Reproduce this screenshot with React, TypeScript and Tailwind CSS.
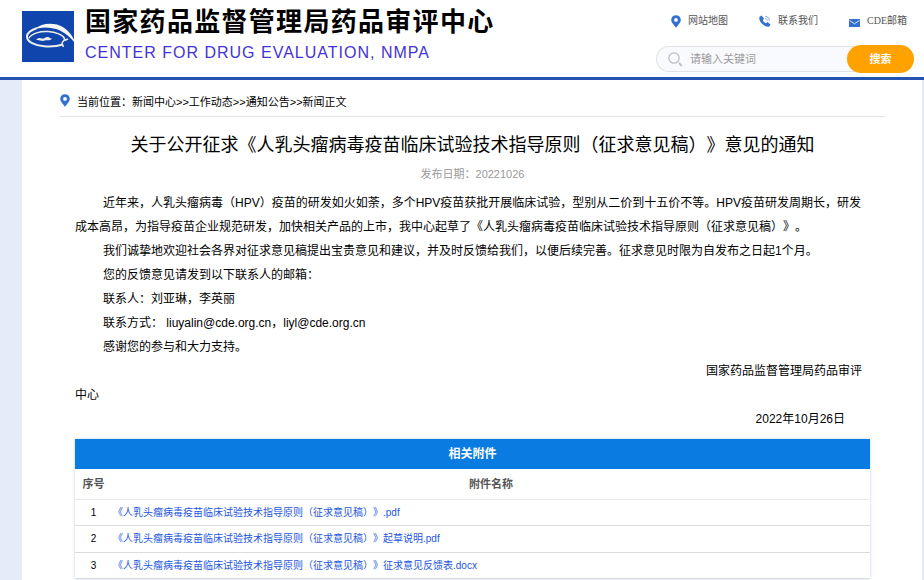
import type { ReactNode } from 'react'

const PARAGRAPHS = [
  '近年来，人乳头瘤病毒（HPV）疫苗的研发如火如荼，多个HPV疫苗获批开展临床试验，型别从二价到十五价不等。HPV疫苗研发周期长，研发成本高昂，为指导疫苗企业规范研发，加快相关产品的上市，我中心起草了《人乳头瘤病毒疫苗临床试验技术指导原则（征求意见稿）》。',
  '我们诚挚地欢迎社会各界对征求意见稿提出宝贵意见和建议，并及时反馈给我们，以便后续完善。征求意见时限为自发布之日起1个月。',
  '您的反馈意见请发到以下联系人的邮箱：',
  '联系人：刘亚琳，李英丽',
  '联系方式： liuyalin@cde.org.cn，liyl@cde.org.cn',
  '感谢您的参与和大力支持。',
]

const ATTACHMENTS = [
  '《人乳头瘤病毒疫苗临床试验技术指导原则（征求意见稿）》.pdf',
  '《人乳头瘤病毒疫苗临床试验技术指导原则（征求意见稿）》起草说明.pdf',
  '《人乳头瘤病毒疫苗临床试验技术指导原则（征求意见稿）》征求意见反馈表.docx',
]

const CRUMBS = ['新闻中心', '工作动态', '通知公告', '新闻正文']

function Logo() {
  return (
    <svg viewBox="0 0 54 51" className="h-[51px] w-[54px] shrink-0" aria-hidden="true">
      <rect width="52" height="51" fill="#1045ad" />
      <path
        d="M13 18C18 13 27 11.5 35 13.5C44 16 50 23 54 33C48 26 42 20.5 34 18C27 16 20 16 13 18Z"
        fill="#f7f5f2"
      />
      <path
        d="M15 17C9 19 5 22 5 25.5C5 31 13 34.5 22 35.2C29 35.7 36 35 41 33.5"
        fill="none"
        stroke="#efede9"
        strokeWidth="2"
      />
      <path
        d="M7 27C10 22.5 18 20 26 20.5C34 21 41 24 42.5 27.5C43 29.5 40 30.5 40 32.5L41.5 36M42.5 29.5L46 28"
        fill="none"
        stroke="#efede9"
        strokeWidth="1.5"
      />
      <path
        d="M14 29C16 26.5 18 26.5 20 27.5C23 28 23 25.5 26 26C28 26.2 27 28 30 27.5C28 30.5 25 28.5 22 29.8C19 30.5 18 28.5 14 29Z"
        fill="#efede9"
      />
    </svg>
  )
}

function PinIcon() {
  return (
    <svg viewBox="0 0 10 13" className="h-[13px] w-[10px] shrink-0" aria-hidden="true">
      <path
        fillRule="evenodd"
        d="M5 0.3C2.2 0.3 0.2 2.3 0.2 5C0.2 7.8 3 9.8 5 12.7C7 9.8 9.8 7.8 9.8 5C9.8 2.3 7.8 0.3 5 0.3ZM5 3A1.9 1.9 0 1 1 5 6.8A1.9 1.9 0 1 1 5 3Z"
        fill="#3370cf"
      />
    </svg>
  )
}

function PhoneIcon() {
  return (
    <svg viewBox="0 0 12 12" className="size-3 shrink-0" aria-hidden="true">
      <path
        d="M0.6 1.8L2.6 0.5L5 3.6L3.8 5.2C4.4 6.5 5.5 7.6 6.9 8.2L8.5 7L11.5 9.4L10.2 11.4C8.6 12.2 5.5 11.2 3.1 8.8C0.7 6.2 -0.3 3.3 0.6 1.8Z"
        fill="#3370cf"
      />
      <path d="M6.3 3.6C7.5 3.7 8.2 4.4 8.3 5.6M6.3 1.5C8.8 1.6 10.3 3.1 10.4 5.6" fill="none" stroke="#7ba1dd" />
    </svg>
  )
}

function MailIcon() {
  return (
    <svg viewBox="0 0 11 8" className="mt-[3px] h-2 w-[11px] shrink-0" aria-hidden="true">
      <rect width="11" height="8" fill="#3370cf" />
      <path d="M0.5 1.4L5.5 4.8L10.5 1.4" fill="none" stroke="#dce7f8" />
    </svg>
  )
}

function TopLink({ icon, children }: { icon: ReactNode; children: ReactNode }) {
  return (
    <a href="#" className="flex items-center gap-[7px] text-[10px] leading-4 text-[#555]">
      {icon}
      {children}
    </a>
  )
}

function Header() {
  return (
    <header className="flex h-20 items-start justify-between border-b-3 border-[#2553b2] bg-white pr-[10px] pl-[22px]">
      <div className="flex gap-[9px] pt-[11px]">
        <Logo />
        <div className="-mt-2 whitespace-nowrap">
          <p className="text-[26px] leading-[38px] font-bold tracking-wider text-black">国家药品监督管理局药品审评中心</p>
          <p className="text-base leading-6 tracking-[1px] text-[#4433d4]">CENTER FOR DRUG EVALUATION, NMPA</p>
        </div>
      </div>

      <div className="w-[258px] pt-[13px]">
        <nav className="flex justify-between pr-[7px] pl-[15px]" aria-label="快捷链接">
          <TopLink icon={<PinIcon />}>网站地图</TopLink>
          <TopLink icon={<PhoneIcon />}>联系我们</TopLink>
          <TopLink icon={<MailIcon />}>
            <span className="font-['Liberation_Serif','Noto_Sans_CJK_SC',serif]">CDE邮箱</span>
          </TopLink>
        </nav>
        <form className="mt-4 flex h-7 items-center" onSubmit={(event) => event.preventDefault()}>
          <div className="-mr-4 flex h-[26px] min-w-0 flex-1 items-center gap-[7px] rounded-l-full border border-r-0 border-[#e2e2e4] bg-[#f9faff] pr-4 pl-[11px]">
            <svg viewBox="0 0 15 15" className="size-[15px] shrink-0" fill="none" stroke="#bfbfbf" aria-hidden="true">
              <circle cx="6" cy="6" r="5.2" strokeWidth="1.3" />
              <path d="M11 11L13.8 13.8" strokeWidth="1.8" />
            </svg>
            <input
              type="search"
              aria-label="请输入关键词"
              placeholder="请输入关键词"
              className="w-full min-w-0 bg-transparent text-[11px] outline-none placeholder:text-[#999]"
            />
          </div>
          <button type="submit" className="relative h-7 w-[67px] rounded-full bg-[#ffa200] text-[11px] font-bold text-white">
            搜索
          </button>
        </form>
      </div>
    </header>
  )
}

function Breadcrumb() {
  return (
    <nav className="flex h-[37px] items-center gap-[7px] border-b border-[#e2e2e2] pt-2 text-[11px]" aria-label="当前位置">
      <div className="pb-1">
        <PinIcon />
      </div>
      <p>
        当前位置：
        {CRUMBS.map((crumb, index) => (
          <span key={crumb}>
            {index > 0 ? '>>' : null}
            <a href="#">{crumb}</a>
          </span>
        ))}
      </p>
    </nav>
  )
}

function Attachments() {
  return (
    <table className="mt-2 w-full border-collapse text-[10px] shadow-[0_0_3px_#c5d3e8]">
      <thead>
        <tr className="h-[30px] bg-[#0a7be0] text-xs text-white">
          <th colSpan={2} className="font-bold">
            相关附件
          </th>
        </tr>
        <tr className="h-[30px] border-b border-[#e8e8e8] text-[11px] text-[#555]">
          <th scope="col" className="w-[37px] font-bold">
            序号
          </th>
          <th scope="col" className="font-bold">
            附件名称
          </th>
        </tr>
      </thead>
      <tbody>
        {ATTACHMENTS.map((name, index) => (
          <tr key={name} className="h-[26px] border-b border-[#dcdcdc] even:h-[27px]">
            <td className="text-center">{index + 1}</td>
            <td className="pl-px">
              <a href="#" className="text-[#2255dd]">
                {name}
              </a>
            </td>
          </tr>
        ))}
      </tbody>
    </table>
  )
}

export default function App() {
  return (
    <div
      lang="zh-CN"
      className="min-h-screen bg-[#e4ebf9] font-['Liberation_Sans','Noto_Sans_CJK_SC',sans-serif] text-black [text-spacing-trim:space-all]"
    >
      <Header />
      <div className="pr-[2px] pl-[22px]">
        <main className="min-h-[500px] bg-white pr-[37px] pl-[38px]">
          <Breadcrumb />
          <article className="px-[15px]">
            <h1 className="pt-3 text-center text-lg leading-8">
              关于公开征求《人乳头瘤病毒疫苗临床试验技术指导原则（征求意见稿）》意见的通知
            </h1>
            <p className="pt-[3px] text-center text-[11px] leading-5 text-[#999]">发布日期：20221026</p>
            <div className="pt-[7px] text-xs leading-6">
              {PARAGRAPHS.map((paragraph) => (
                <p key={paragraph} className="indent-[28px]">
                  {paragraph}
                </p>
              ))}
              <p className="indent-[631px]">国家药品监督管理局药品审评中心</p>
              <p className="pr-[25px] text-right">2022年10月26日</p>
            </div>
            <Attachments />
          </article>
        </main>
      </div>
    </div>
  )
}
